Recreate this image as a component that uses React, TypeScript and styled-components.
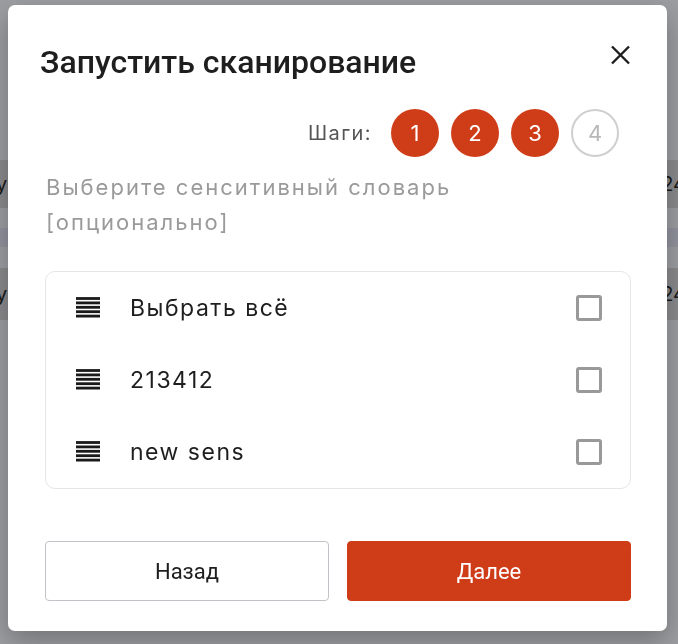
import React, { useState } from 'react';
import styled, { createGlobalStyle } from 'styled-components';

const GlobalStyle = createGlobalStyle`
  html, body {
    margin: 0;
    padding: 0;
    height: 100%;
  }
  body {
    font-family: Inter, "Noto Sans", sans-serif;
    overflow: hidden;
    background: #9d9ea2;
  }
`;

// page behind the dialog (only the edges are visible)
const Page = styled.div`
  height: 644px;
  padding-top: 160px;
  box-sizing: border-box;
  font-family: Inter, sans-serif;
  font-size: 20px;
  color: #1a1a1a;
`;

const BgRow = styled.div<{ $h: number; $bg: string }>`
  height: ${(p) => p.$h}px;
  background: ${(p) => p.$bg};
  display: flex;
  align-items: center;
  justify-content: space-between;
  margin-left: -4px;
  margin-right: -8px;
`;

const Overlay = styled.div`
  position: fixed;
  inset: 0;
  padding: 5px 11px 13px 8px;
  box-sizing: border-box;
`;

const Modal = styled.div`
  width: 659px;
  height: 626px;
  box-sizing: border-box;
  background: #fff;
  border-radius: 7px;
  box-shadow: 0 10px 28px rgba(0, 0, 0, 0.28);
  padding: 40px 36px 30px 32px;
  display: flex;
  flex-direction: column;
`;

const Header = styled.div`
  display: flex;
  justify-content: space-between;
  align-items: flex-start;
  height: 32px;
`;

const Title = styled.h2`
  margin: 0;
  font-family: Roboto, sans-serif;
  font-weight: 500;
  font-size: 32px;
  line-height: 34px;
  color: #1e1e1e;
`;

const CloseButton = styled.button`
  width: 24px;
  height: 24px;
  padding: 0;
  border: 0;
  background: none;
  cursor: pointer;
  display: flex;
`;

const Body = styled.div`
  padding-left: 5px;
  display: flex;
  flex-direction: column;
`;

const Steps = styled.div`
  margin-top: 32px;
  display: flex;
  justify-content: flex-end;
  align-items: center;
  gap: 12px;
  padding-right: 12px;
`;

const StepsLabel = styled.span`
  font-size: 20px;
  letter-spacing: 1.4px;
  color: #555;
  margin-right: 7px;
`;

const Step = styled.div<{ $done: boolean }>`
  width: 48px;
  height: 48px;
  box-sizing: border-box;
  border-radius: 50%;
  display: flex;
  align-items: center;
  justify-content: center;
  font-size: 22px;
  background: ${(p) => (p.$done ? '#cf3c18' : '#fff')};
  color: ${(p) => (p.$done ? '#fff' : '#b8b8b8')};
  border: ${(p) => (p.$done ? 'none' : '2px solid #cfcfcf')};
`;

const Subtitle = styled.p`
  margin: 12.5px 0 0 1px;
  font-size: 22px;
  line-height: 35px;
  letter-spacing: 2px;
  color: #9a9a9a;
  max-width: 480px;
`;

const List = styled.div`
  margin-top: 31.5px;
  border: 1px solid #e6e6ea;
  border-radius: 10px;
  display: flex;
  flex-direction: column;
`;

const Row = styled.label`
  height: 72px;
  display: flex;
  align-items: center;
  padding: 0 28px 0 30px;
  cursor: pointer;
`;

const RowText = styled.span`
  flex: 1;
  margin-left: 30px;
  font-size: 23px;
  letter-spacing: 1.5px;
  color: #1e1e1e;
`;

const Check = styled.span<{ $on: boolean }>`
  width: 26px;
  height: 26px;
  box-sizing: border-box;
  border: 3px solid #999;
  border-radius: 3px;
  background: ${(p) => (p.$on ? '#cf3c18' : '#fff')};
  border-color: ${(p) => (p.$on ? '#cf3c18' : '#999')};
`;

const Footer = styled.div`
  margin-top: 52px;
  display: grid;
  grid-template-columns: 1fr 1fr;
  gap: 18px;
`;

const Button = styled.button<{ $primary?: boolean }>`
  height: 60px;
  border-radius: 4px;
  font-family: Roboto, sans-serif;
  font-weight: 400;
  font-size: 22px;
  cursor: pointer;
  background: ${(p) => (p.$primary ? '#cf3c18' : '#fff')};
  color: ${(p) => (p.$primary ? '#fff' : '#1e1e1e')};
  border: 1px solid ${(p) => (p.$primary ? '#cf3c18' : '#c2c2c8')};
`;

const DragIcon = () => (
  <svg width="24" height="22" viewBox="0 0 24 22">
    {[1.5, 5.9, 10.3, 14.7, 19.1].map((y) => (
      <rect key={y} x="0" y={y - 1.4} width="24" height="2.8" fill="#1a1a1a" />
    ))}
  </svg>
);

const items = ['Выбрать всё', '213412', 'new sens'];

const App = () => {
  const [checked, setChecked] = useState<boolean[]>([false, false, false]);

  const toggle = (i: number) => {
    const next = [...checked];
    next[i] = !next[i];
    setChecked(next);
  };

  return (
    <>
      <GlobalStyle />
      <Page>
        <BgRow $h={48} $bg="#8b8b8d">
          <span>у</span>
          <span>24</span>
        </BgRow>
        <BgRow $h={20} $bg="#9d9ea2" />
        <BgRow $h={19} $bg="#92949e" />
        <BgRow $h={21} $bg="#9d9ea2" />
        <BgRow $h={52} $bg="#8b8b8d">
          <span>у</span>
          <span>24</span>
        </BgRow>
      </Page>
      <Overlay>
        <Modal>
          <Header>
            <Title>Запустить сканирование</Title>
            <CloseButton aria-label="close">
              <svg width="24" height="24" viewBox="0 0 24 24">
                <path d="M5 1.5 L22 18.5 M22 1.5 L5 18.5" stroke="#1e1e1e" strokeWidth="2.4" />
              </svg>
            </CloseButton>
          </Header>
          <Body>
            <Steps>
              <StepsLabel>Шаги:</StepsLabel>
              {[1, 2, 3, 4].map((n) => (
                <Step key={n} $done={n <= 3}>
                  {n}
                </Step>
              ))}
            </Steps>
            <Subtitle>Выберите сенситивный словарь [опционально]</Subtitle>
            <List>
              {items.map((text, i) => (
                <Row key={text} onClick={() => toggle(i)}>
                  <DragIcon />
                  <RowText>{text}</RowText>
                  <Check $on={checked[i]} />
                </Row>
              ))}
            </List>
            <Footer>
              <Button>Назад</Button>
              <Button $primary>Далее</Button>
            </Footer>
          </Body>
        </Modal>
      </Overlay>
    </>
  );
};

export default App;
